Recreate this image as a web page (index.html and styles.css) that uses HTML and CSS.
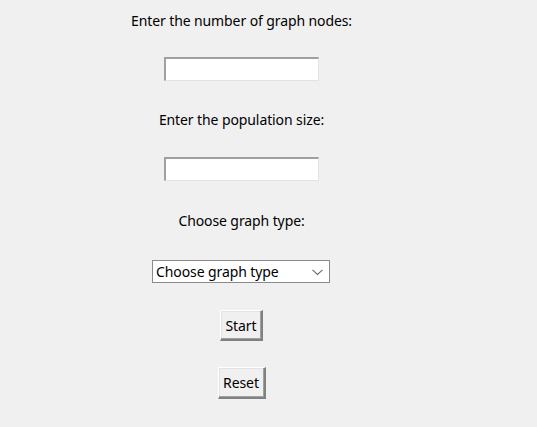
FILE: index.html
```html
<!DOCTYPE html>
<html>
<head>
<meta charset="utf-8">
<link rel="stylesheet" href="styles.css">
</head>
<body>
<div class="app">
  <div class="label l1">Enter the number of graph nodes:</div>
  <div class="entry e1"></div>
  <div class="label l2">Enter the population size:</div>
  <div class="entry e2"></div>
  <div class="label l3">Choose graph type:</div>
  <div class="combo">
    <span class="combo-text">Choose graph type</span>
    <svg class="chev" width="11" height="7" viewBox="0 0 11 7"><path d="M0.5 0.8 L5.5 5.5 L10.5 0.8" fill="none" stroke="#6a6a6a" stroke-width="1.1"/></svg>
  </div>
  <div class="btn start">Start</div>
  <div class="btn reset">Reset</div>
</div>
</body>
</html>
```
FILE: styles.css
```css
html, body {
  margin: 0;
  padding: 0;
  background: #f0f0f0;
  width: 537px;
  height: 427px;
  overflow: hidden;
}
.app {
  width: 483px;
  display: flex;
  flex-direction: column;
  align-items: center;
  font-family: "Noto Sans", sans-serif;
  font-size: 14px;
  letter-spacing: -0.1px;
  color: #000;
}
.label {
  height: 22px;
  line-height: 22px;
  white-space: nowrap;
}
.l1 { margin-top: 10px; }
.l2 { margin-top: 28px; }
.l3 { margin-top: 29px; }
.entry {
  box-sizing: border-box;
  width: 155px;
  height: 24px;
  background: #fff;
  border-top: 2px solid #a0a0a0;
  border-left: 2px solid #a0a0a0;
  border-right: 1px solid #e3e3e3;
  border-bottom: 1px solid #e3e3e3;
}
.e1 { margin-top: 25px; }
.e2 { margin-top: 26px; }
.combo {
  box-sizing: border-box;
  margin-top: 28px;
  margin-left: -1px;
  width: 178px;
  height: 23px;
  background: #fff;
  border: 1px solid #8a8a8a;
  display: flex;
  align-items: center;
  justify-content: space-between;
  padding: 0 6px 0 3px;
}
.combo-text {
  font-size: 14px;
  line-height: 20px;
}
.chev { display: block; margin-top: 1px; }
.btn {
  box-sizing: border-box;
  background: #f0f0f0;
  border-top: 1px solid #fff;
  border-left: 1px solid #fff;
  border-right: 2px solid #808080;
  border-bottom: 2px solid #808080;
  box-shadow: inset -1px -1px 0 #a0a0a0, inset 1px 1px 0 #e3e3e3;
  display: flex;
  align-items: center;
  justify-content: center;
  font-size: 14px;
}
.start {
  margin-top: 27px;
  width: 43px;
  height: 31px;
}
.reset {
  margin-top: 26px;
  width: 48px;
  height: 32px;
}
```
